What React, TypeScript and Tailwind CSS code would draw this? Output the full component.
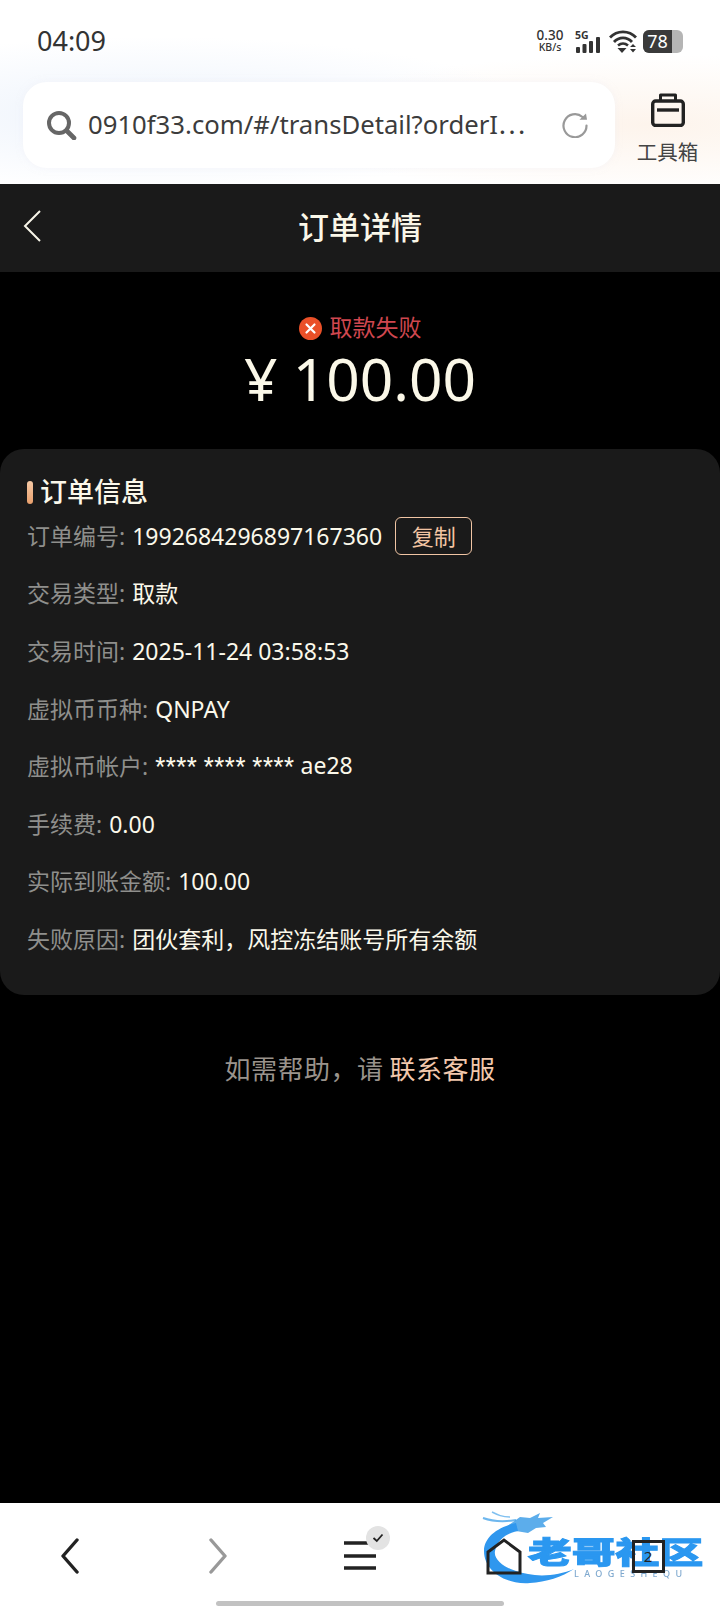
import React from "react";

function Row({ label, value, extra }: { label: string; value: React.ReactNode; extra?: React.ReactNode }) {
  return (
    <div className="flex h-[57.6px] items-center whitespace-nowrap text-[23px] leading-[30px]">
      <span className="text-[#8f8f8c]">{label}:</span>
      <span className="ml-[7px] text-[#fbf8ea]">{value}</span>
      {extra}
    </div>
  );
}

export default function App() {
  return (
    <div className="relative flex h-[1608px] w-[720px] flex-col overflow-hidden bg-black [font-family:'Noto_Sans','Noto_Sans_CJK_SC',sans-serif]">
      <header className="flex h-[184px] flex-col bg-white bg-[radial-gradient(ellipse_at_22%_62%,#edf3fc_0%,transparent_48%),radial-gradient(ellipse_at_90%_68%,#fdf4ec_0%,transparent_40%)]">
        <div className="flex h-[82px] items-center justify-between pl-[37px] pr-[37px]">
          <span className="text-[27px] text-[#333333]">04:09</span>
          <div className="flex items-center">
            <div className="flex w-[32px] flex-col items-center text-[#333]">
              <span className="text-[13.5px] font-medium leading-[13px]">0.30</span>
              <span className="text-[10.5px] font-medium leading-[11px]">KB/s</span>
            </div>
            <svg width="26" height="23" viewBox="0 0 26 23" className="ml-[9px]">
              <text x="0" y="9" fontSize="10.5" fontWeight="700" fill="#333" fontFamily="Noto Sans">5G</text>
              <rect x="1" y="17" width="4" height="6" rx="1" fill="#333" />
              <rect x="7.5" y="14" width="4" height="9" rx="1" fill="#333" />
              <rect x="14" y="11" width="4" height="12" rx="1" fill="#333" />
              <rect x="21" y="7" width="4" height="16" rx="1" fill="#333" />
            </svg>
            <svg width="28" height="23" viewBox="0 0 28 23" fill="none" className="ml-[8px]">
              <path d="M1 7.5 C8 0 20 0 27 7.5" stroke="#333" strokeWidth="2.8" />
              <path d="M5 12 C10 6.5 18 6.5 23 12" stroke="#333" strokeWidth="2.8" />
              <path d="M9 15.5 C12 13 16 13 19 15.5" stroke="#333" strokeWidth="2.6" />
              <path d="M8.5 18 H17.5 L13 23 Z" fill="#333" />
              <path d="M21 17 L24 14 L27 17 Z M21 19 H27 L24 22.5 Z" fill="#333" />
            </svg>
            <div className="ml-[6px] flex h-[23px] w-[40px] items-center overflow-hidden rounded-[6px] bg-[#b5b5b5]">
              <div className="flex h-full w-[29px] items-center justify-center bg-[#3a3a3a] text-[18px] leading-[23px] text-white">78</div>
            </div>
          </div>
        </div>
        <div className="flex pl-[23px]">
          <div className="flex h-[86px] w-[592px] shrink-0 items-center rounded-[24px] bg-white pl-[23px] pr-[26px] shadow-[0_0_6px_rgba(240,240,245,0.5)]">
            <svg width="31" height="30" viewBox="0 0 31 30" fill="none" className="shrink-0">
              <circle cx="13" cy="13" r="10" stroke="#666" strokeWidth="4" />
              <path d="M20.5 20.5 L28 28" stroke="#666" strokeWidth="4.6" strokeLinecap="round" />
            </svg>
            <span className="ml-[11px] mb-[2px] flex-1 overflow-hidden whitespace-nowrap text-[25.7px] text-[#3c3c3c]">0910f33.com/#/transDetail?orderI<span className="[font-family:'Noto_Sans_CJK_SC',sans-serif]">⋯</span></span>
            <svg width="28" height="26" viewBox="0 0 28 26" fill="none" className="shrink-0">
              <path d="M21.5 5 A11.5 11.5 0 1 0 25.5 13.5" stroke="#999" strokeWidth="2.2" strokeLinecap="round" />
              <path d="M18.5 7.8 L26 7.8 L25 1.5 Z" fill="#999" />
            </svg>
          </div>
          <div className="flex flex-1 flex-col items-center pt-[11px]">
            <svg width="34" height="34" viewBox="0 0 34 34" fill="none" className="shrink-0">
              <path d="M9.5 7.5 V2 H24.5 V7.5" stroke="#222" strokeWidth="3" strokeLinejoin="round" />
              <rect x="1.7" y="8" width="30.6" height="24.5" rx="3" stroke="#222" strokeWidth="3.4" />
              <path d="M6 17 H28" stroke="#222" strokeWidth="3.4" />
            </svg>
            <span className="mt-[13px] whitespace-nowrap text-[20.5px] leading-[24px] text-[#444]">工具箱</span>
          </div>
        </div>
      </header>

      <nav className="relative flex h-[88px] items-center justify-center bg-[#1a1a1a]">
        <svg width="20" height="32" viewBox="0 0 20 32" fill="none" className="absolute left-[23px] top-[26px]">
          <path d="M17 1 L2 16 L17 31" stroke="#f7f5e8" strokeWidth="2" />
        </svg>
        <h1 className="mb-[2px] text-[31px] font-medium leading-[36px] text-[#faf7e8]">订单详情</h1>
      </nav>

      <section className="flex h-[177px] flex-col items-center">
        <div className="mt-[41px] flex h-[28px] items-center">
          <svg width="23" height="23" viewBox="0 0 23 23" className="mt-[2px]">
            <circle cx="11.5" cy="11.5" r="11.5" fill="#ea5028" />
            <path d="M7.5 7.5 L15.5 15.5 M15.5 7.5 L7.5 15.5" stroke="#fff" strokeWidth="2.2" strokeLinecap="round" />
          </svg>
          <span className="ml-[8px] text-[23px] leading-[28px] text-[#cf474f]">取款失败</span>
        </div>
        <div className="mt-[4px] whitespace-nowrap text-[58.6px] leading-[66px] text-[#fbf8e8]">¥ 100.00</div>
      </section>

      <section className="h-[546px] rounded-[24px] bg-[#1a1a1a] pl-[27px] pt-[25px]">
        <div className="flex h-[36px] items-center">
          <div className="h-[23px] w-[6px] rounded-[3px] bg-gradient-to-b from-[#f5c9a5] to-[#e89f6c]" />
          <h2 className="ml-[7px] text-[27px] font-medium leading-[34px] text-[#fbf8ea]">订单信息</h2>
        </div>
        <div className="-mt-[3px]">
          <Row
            label="订单编号"
            value="1992684296897167360"
            extra={
              <span className="ml-[13px] flex h-[38px] w-[77px] items-center justify-center rounded-[6px] border border-[#f0c5a4] text-[22px] text-[#f2c4a2]">复制</span>
            }
          />
          <Row label="交易类型" value="取款" />
          <Row label="交易时间" value="2025-11-24 03:58:53" />
          <Row label="虚拟币币种" value="QNPAY" />
          <Row
            label="虚拟币帐户"
            value={
              <>
                <span className="tracking-[0.65px] [font-family:Roboto,sans-serif]">**** **** ****</span> ae28
              </>
            }
          />
          <Row label="手续费" value="0.00" />
          <Row label="实际到账金额" value="100.00" />
          <Row label="失败原因" value="团伙套利，风控冻结账号所有余额" />
        </div>
      </section>

      <div className="mt-[56px] flex justify-center text-[26px] leading-[36px] tracking-[0.5px] text-[#9a938c]">
        如需帮助，请<span className="ml-[6px] text-[#f2c8ac]">联系客服</span>
      </div>

      <footer className="absolute bottom-0 left-0 h-[105px] w-full bg-white">
        {/* watermark, under the toolbar icons */}
        <div className="absolute left-[480px] top-[6px] h-[90px] w-[230px] blur-[0.6px]">
          <svg width="100" height="80" viewBox="0 0 100 80" fill="none" className="absolute left-0 top-0">
            <path d="M3 9 C14 13 24 13 36 11" stroke="#4aa5ea" strokeWidth="2" opacity="0.8" />
            <path d="M12 3 C18 6 22 8 30 8" stroke="#4aa5ea" strokeWidth="1.5" opacity="0.7" />
            <path d="M26 18 L40 8 L50 9 L60 4 L58 9 L73 8 L63 14 L66 18 L56 19 L48 24 L36 22 Z" fill="#3f9fe8" opacity="0.85" />
            <path d="M36 14 C18 18 4 28 4 42 C4 62 26 76 50 74 C66 73 82 68 94 60 C80 66 62 68 48 65 C28 62 13 52 15 42 C17 32 26 24 38 22 Z" fill="#2f97ee" />
          </svg>
          <div className="absolute left-[48px] top-[26px] origin-left scale-x-[1.46] whitespace-nowrap text-[30px] font-black leading-[34px] text-[#2a97f0] [-webkit-text-stroke:1px_#2a97f0]">老哥社区</div>
          <div className="absolute left-[94px] top-[59px] whitespace-nowrap text-[9px] font-medium leading-[12px] tracking-[5.4px] text-[#7fa9cf]">LAOGESHEQU</div>
        </div>
        <div className="relative grid h-[105px] grid-cols-5 items-start pt-[35px]">
          <div className="flex justify-center pr-[4px]">
            <svg width="22" height="36" viewBox="0 0 22 36" fill="none"><path d="M18 2 L4 18 L18 34" stroke="#222" strokeWidth="3.4" strokeLinecap="round" strokeLinejoin="round" /></svg>
          </div>
          <div className="flex justify-center pl-[4px]">
            <svg width="22" height="36" viewBox="0 0 22 36" fill="none"><path d="M4 2 L18 18 L4 34" stroke="#999" strokeWidth="3.4" strokeLinecap="round" strokeLinejoin="round" /></svg>
          </div>
          <div className="relative flex justify-center pt-[2px]">
            <svg width="32" height="30" viewBox="0 0 32 30"><path d="M0 3 H32 M0 16 H32 M0 28 H32" stroke="#222" strokeWidth="3.4" /></svg>
            <div className="absolute left-[78px] top-[-12px] flex h-[24px] w-[24px] items-center justify-center rounded-full bg-[#e3e3e3]">
              <svg width="14" height="14" viewBox="0 0 14 14" fill="none"><path d="M2.5 7 L5.8 10 L11.5 3.5" stroke="#222" strokeWidth="1.8" /></svg>
            </div>
          </div>
          <div className="flex justify-center">
            <svg width="36" height="37" viewBox="0 0 36 37" fill="none"><path d="M2 14 L18 2 L34 14 V35 H2 Z" stroke="#222" strokeWidth="3" /></svg>
          </div>
          <div className="flex justify-center pt-[2px]">
            <div className="flex h-[33px] w-[33px] items-center justify-center border-[3px] border-[#222] text-[15px] leading-none text-[#222]">2</div>
          </div>
        </div>
        <div className="absolute bottom-[2px] left-[216px] h-[5px] w-[288px] rounded-full bg-[#c2c2c2]" />
      </footer>
    </div>
  );
}
